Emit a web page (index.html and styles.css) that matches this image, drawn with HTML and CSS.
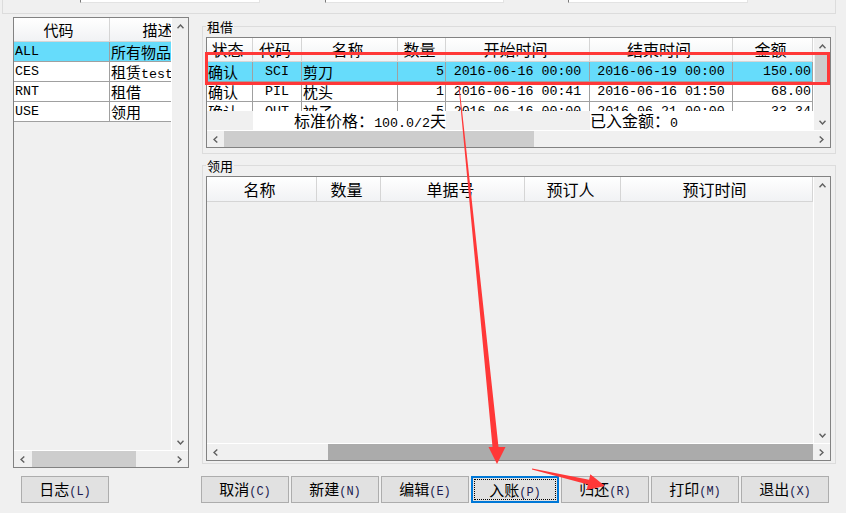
FILE: index.html
```html
<!DOCTYPE html>
<html lang="zh-CN">
<head>
  <meta charset="UTF-8">
  <meta name="viewport" content="width=device-width, initial-scale=1.0">
  <title>租借管理</title>
  <link rel="stylesheet" href="styles.css">
</head>
<body>
  <div class="top">
    <div class="edit e1"></div>
    <div class="edit e2"></div>
    <div class="edit e3"></div>
  </div>

  <div class="main">
    <!-- type list -->
    <div class="side">
      <div class="grid list">
        <div class="body">
          <div class="tr th">
            <div>代码</div><div>描述</div>
          </div>
          <div class="tr sel"><div class="td m">ALL</div><div class="td">所有物品</div></div>
          <div class="tr"><div class="td m">CES</div><div class="td">租赁<span class="m">test</span></div></div>
          <div class="tr"><div class="td m">RNT</div><div class="td">租借</div></div>
          <div class="tr"><div class="td m">USE</div><div class="td">领用</div></div>
        </div>
        <div class="vscroll">
          <div class="arr"><svg width="7" height="5" viewBox="0 0 7 5"><path d="M0.5 4.3 3.5 1 6.5 4.3" fill="none" stroke="#606060" stroke-width="1.4"/></svg></div>
          <div class="track"></div>
          <div class="arr"><svg width="7" height="5" viewBox="0 0 7 5"><path d="M0.5 0.7 3.5 4 6.5 0.7" fill="none" stroke="#606060" stroke-width="1.4"/></svg></div>
        </div>
        <div class="hscroll">
          <div class="arr"><svg width="5" height="7" viewBox="0 0 5 7"><path d="M4.3 0.5 1 3.5 4.3 6.5" fill="none" stroke="#606060" stroke-width="1.4"/></svg></div>
          <div class="track"><div class="thumb list-thumb"></div></div>
          <div class="arr"><svg width="5" height="7" viewBox="0 0 5 7"><path d="M0.7 0.5 4 3.5 0.7 6.5" fill="none" stroke="#606060" stroke-width="1.4"/></svg></div>
        </div>
      </div>
      <button class="btn">日志<span>(L)</span></button>
    </div>

    <div class="content">
      <fieldset class="group">
        <legend>租借</legend>
        <div class="grid rent">
          <div class="body">
            <div class="rows">
              <div class="tr th">
                <div>状态</div><div>代码</div><div>名称</div><div>数量</div><div>开始时间</div><div>结束时间</div><div>金额</div>
              </div>
              <div class="tr sel">
                <div class="td">确认</div><div class="td m c">SCI</div><div class="td">剪刀</div><div class="td m r">5</div>
                <div class="td m c">2016-06-16 00:00</div><div class="td m c">2016-06-19 00:00</div><div class="td m r">150.00</div>
              </div>
              <div class="tr">
                <div class="td">确认</div><div class="td m c">PIL</div><div class="td">枕头</div><div class="td m r">1</div>
                <div class="td m c">2016-06-16 00:41</div><div class="td m c">2016-06-16 01:50</div><div class="td m r">68.00</div>
              </div>
              <div class="tr">
                <div class="td">确认</div><div class="td m c">OUT</div><div class="td">被子</div><div class="td m r">5</div>
                <div class="td m c">2016-06-16 00:00</div><div class="td m c">2016-06-21 00:00</div><div class="td m r">33.34</div>
              </div>
            </div>
            <div class="tr foot">
              <div></div>
              <div class="fw r span3">标准价格：<span class="m">100.0/2</span>天</div>
              <div></div>
              <div class="fw span2">已入金额：<span class="m">0</span></div>
            </div>
          </div>
          <div class="vscroll">
            <div class="arr"><svg width="7" height="5" viewBox="0 0 7 5"><path d="M0.5 4.3 3.5 1 6.5 4.3" fill="none" stroke="#606060" stroke-width="1.4"/></svg></div>
            <div class="track"><div class="thumb rent-vthumb"></div></div>
            <div class="arr"><svg width="7" height="5" viewBox="0 0 7 5"><path d="M0.5 0.7 3.5 4 6.5 0.7" fill="none" stroke="#606060" stroke-width="1.4"/></svg></div>
          </div>
          <div class="hscroll">
            <div class="arr"><svg width="5" height="7" viewBox="0 0 5 7"><path d="M4.3 0.5 1 3.5 4.3 6.5" fill="none" stroke="#606060" stroke-width="1.4"/></svg></div>
            <div class="track"><div class="thumb rent-hthumb"></div></div>
            <div class="arr"><svg width="5" height="7" viewBox="0 0 5 7"><path d="M0.7 0.5 4 3.5 0.7 6.5" fill="none" stroke="#606060" stroke-width="1.4"/></svg></div>
          </div>
        </div>
      </fieldset>

      <fieldset class="group use-group">
        <legend>领用</legend>
        <div class="grid use">
          <div class="body">
            <div class="tr th">
              <div>名称</div><div>数量</div><div>单据号</div><div>预订人</div><div>预订时间</div>
            </div>
          </div>
          <div class="vscroll">
            <div class="arr"><svg width="7" height="5" viewBox="0 0 7 5"><path d="M0.5 4.3 3.5 1 6.5 4.3" fill="none" stroke="#606060" stroke-width="1.4"/></svg></div>
            <div class="track"></div>
            <div class="arr"><svg width="7" height="5" viewBox="0 0 7 5"><path d="M0.5 0.7 3.5 4 6.5 0.7" fill="none" stroke="#606060" stroke-width="1.4"/></svg></div>
          </div>
          <div class="hscroll">
            <div class="arr"><svg width="5" height="7" viewBox="0 0 5 7"><path d="M4.3 0.5 1 3.5 4.3 6.5" fill="none" stroke="#606060" stroke-width="1.4"/></svg></div>
            <div class="track"><div class="thumb use-thumb"></div></div>
            <div class="arr"><svg width="5" height="7" viewBox="0 0 5 7"><path d="M0.7 0.5 4 3.5 0.7 6.5" fill="none" stroke="#606060" stroke-width="1.4"/></svg></div>
          </div>
        </div>
      </fieldset>

      <div class="buttons">
        <button class="btn">取消<span>(C)</span></button>
        <button class="btn">新建<span>(N)</span></button>
        <button class="btn">编辑<span>(E)</span></button>
        <button class="btn focus">入账<span>(P)</span></button>
        <button class="btn">归还<span>(R)</span></button>
        <button class="btn">打印<span>(M)</span></button>
        <button class="btn">退出<span>(X)</span></button>
      </div>
    </div>
  </div>

  <!-- red annotation marks drawn over the window -->
  <svg class="marks" width="846" height="513" viewBox="0 0 846 513">
    <rect x="206.5" y="53.5" width="622" height="30" fill="none" stroke="#ff3838" stroke-width="3"/>
    <polygon points="458.6,86 459.4,86 498.5,447 505.5,447 497,464 488.5,447 492.5,447" fill="#ff3838"/>
    <polygon points="532.1,468.6 589.1,479.7 590.3,474.3 605,486 586.7,489.9 587.9,484.5 531.9,469.4" fill="#ff3838"/>
  </svg>
</body>
</html>
```

FILE: styles.css
```css
* {
  box-sizing: border-box;
}
body {
  margin: 0;
  width: 846px;
  height: 513px;
  overflow: hidden;
  position: relative;
  background-color: #f0f0f0;
  font-family: "Noto Sans CJK SC", sans-serif;
  color: #000;
}
.m {
  font-family: "Liberation Mono", monospace;
  font-size: 13.3px;
}
.c {
  text-align: center;
}
.r {
  text-align: right;
}

/* top group box (cut off) */
.top {
  margin-left: 2px;
  width: 834px;
  height: 14px;
  border: 1px solid #dcdcdc;
  border-top: none;
  display: flex;
  padding-left: 77px;
}
.edit {
  height: 3px;
  background-color: #fff;
  border-left: 1px solid #7a7a7a;
  border-right: 1px solid #e3e3e3;
  border-bottom: 1px solid #e3e3e3;
}
.e1 {
  width: 180px;
}
.e2 {
  width: 179px;
  margin-left: 65px;
}
.e3 {
  width: 180px;
  margin-left: 64px;
}

.main {
  display: flex;
  margin-top: 3px;
}
.side {
  margin-left: 13px;
  width: 176px;
  display: flex;
  flex-direction: column;
}
.content {
  margin-left: 12px;
  width: 635px;
}

/* grid controls */
.grid {
  display: grid;
  grid-template-columns: 1fr 17px;
  grid-template-rows: 1fr 17px;
  border: 1px solid #828282;
  background-color: #f0f0f0;
}
.body {
  overflow: hidden;
  min-width: 0;
  min-height: 0;
  display: flex;
  flex-direction: column;
}
.rows {
  flex: 1;
  overflow: hidden;
}
.tr {
  display: grid;
  height: 20px;
}
.tr > div {
  white-space: nowrap;
  overflow: hidden;
}
.td {
  font-size: 15px;
  line-height: 19px;
  padding: 0 1px;
  background-color: #fff;
  border-right: 1px solid #a0a0a0;
  border-bottom: 1px solid #a0a0a0;
}
.td.m {
  font-size: 13.3px;
}
.tr.sel .td {
  background-color: #66dcfb;
}
.th {
  height: 24px;
}
.th > div {
  background: linear-gradient(#ffffff, #f1f2f4);
  border-right: 1px solid #d5d5d5;
  border-bottom: 1px solid #d5d5d5;
  text-align: center;
  font-size: 16px;
  line-height: 23px;
  padding-right: 4px;
}

.list {
  height: 451px;
}
.list .tr {
  grid-template-columns: 96px 102px;
}
.list .th > div {
  font-size: 15px;
  padding-right: 6px;
}

.rent {
  height: 111px;
}
.rent .tr {
  grid-template-columns: 46px 49px 96px 48px 144px 143px 80px;
}
.foot {
  flex: none;
  height: 19px;
}
.rent .foot > div {
  font-size: 16px;
  line-height: 19px;
}
.fw {
  background-color: #fff;
}
.span3 {
  grid-column: span 3;
}
.span2 {
  grid-column: span 2;
}

.use {
  height: 285px;
}
.use .tr {
  grid-template-columns: 110px 64px 144px 96px 192px;
}
.use .th {
  height: 25px;
}
.use .th > div {
  line-height: 24px;
}

/* scrollbars */
.vscroll {
  display: flex;
  flex-direction: column;
  border-left: 1px solid #fff;
}
.hscroll {
  grid-column: 1 / 3;
  display: flex;
  border-top: 1px solid #fff;
}
.arr {
  flex: none;
  width: 16px;
  height: 16px;
  display: flex;
  align-items: center;
  justify-content: center;
}
.hscroll .arr {
  width: 17px;
}
.track {
  flex: 1;
  display: flex;
}
.vscroll .track {
  flex-direction: column;
}
.thumb {
  background-color: #cdcdcd;
}
.list-thumb {
  width: 104px;
  margin-left: 1px;
}
.rent-hthumb {
  width: 310px;
}
.rent-vthumb {
  height: 29px;
  margin: 0 1px;
}
.use-thumb {
  flex: 1;
  margin-left: 104px;
  background-color: #ababab;
}

/* group boxes */
.group {
  margin: 3px 0 0 1px;
  width: 634px;
  padding: 4px 4px 5px 3px;
  border: 1px solid #dcdcdc;
}
.group legend {
  padding: 0 1px;
  font-size: 13px;
  line-height: 13px;
}
.use-group {
  margin-top: 5px;
  padding-bottom: 2px;
}

/* buttons */
.btn {
  flex: none;
  width: 88px;
  height: 27px;
  padding: 0;
  background-color: #e1e1e1;
  border: 1px solid #adadad;
  font-family: "Noto Sans CJK SC", sans-serif;
  font-size: 15px;
  line-height: 24px;
  color: #000;
}
.btn span {
  font-family: "Liberation Mono", monospace;
  font-size: 12px;
  color: #1b1b50;
}
.btn.focus {
  border: 2px solid #0078d7;
  outline: 1px dotted #000;
  outline-offset: -4px;
}
.side .btn {
  align-self: flex-start;
  margin: 8px 0 0 8px;
}
.buttons {
  display: flex;
  gap: 2px;
  margin-top: 12px;
}

.marks {
  position: absolute;
  left: 0;
  top: 0;
  pointer-events: none;
}
```
